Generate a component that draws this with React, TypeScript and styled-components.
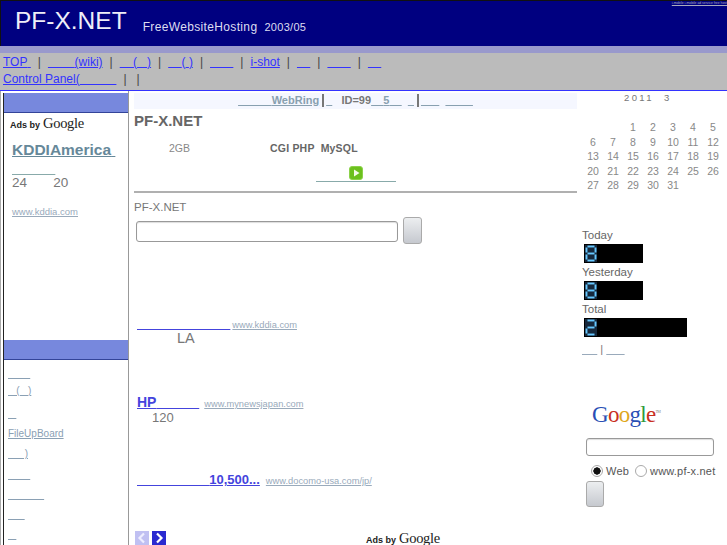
import React from "react";
import styled, { createGlobalStyle } from "styled-components";

const Global = createGlobalStyle`
  html, body { margin: 0; padding: 0; background: #fff; overflow: hidden; }
  body { font-family: "Liberation Sans", Arial, sans-serif; color: #777; }
  * { box-sizing: border-box; }
`;

const Page = styled.div`
  width: 727px;
  height: 545px;
  overflow: hidden;
  display: flex;
  flex-direction: column;
`;
const Header = styled.header`
  height: 46px;
  flex: none;
  background: #000080;
  border-top: 1px solid #111;
  border-left: 1px solid #111;
  display: flex;
  align-items: flex-start;
  color: #ddddf0;
  padding-left: 14px;
`;
const Logo = styled.h1`
  margin: 5px 0 0;
  font-size: 24.5px;
  line-height: 30px;
  font-weight: 400;
  color: #eeeef8;
`;
const Tagline = styled.span`
  margin: 19px 0 0 16px;
  font-size: 12px;
  line-height: 15px;
  letter-spacing: 0.35px;
`;
const TagDate = styled.span`
  margin: 19px 0 0 7px;
  font-size: 11px;
  line-height: 15px;
  letter-spacing: 0.3px;
`;
const TinyLink = styled.a`
  margin: 0 0 0 auto;
  font-size: 3.4px;
  line-height: 5px;
  color: #aab;
  text-decoration: underline;
  white-space: nowrap;
`;
const Strip = styled.div`
  height: 7px;
  flex: none;
  background: #9999cc;
`;
const Nav = styled.nav`
  height: 38px;
  flex: none;
  background: #bbbbbb;
  border-bottom: 1px solid #3333ff;
  padding: 0 0 0 3px;
  font-size: 12px;
  line-height: 17px;
  color: #444;
`;
const NavRow = styled.div`
  display: flex;
  height: 17px;
  white-space: pre;
  &:first-child { margin-top: 1px; }
`;
const NavLink = styled.a`
  color: #3333ff;
  text-decoration: underline;
`;
const Sep = styled.span<{ $m?: number }>`
  margin: 0 ${(p) => p.$m ?? 7}px;
`;
const Columns = styled.div`
  flex: 1;
  min-height: 0;
  display: grid;
  grid-template-columns: 129px 448px 150px;
`;
const Side = styled.aside`
  border-right: 1px solid #999;
  border-left: 1px solid #aaa;
  padding: 2px 0 0 3px;
  height: 100%;
`;
const SideInner = styled.div`
  border-left: 1px solid #222;
  height: 100%;
  margin-left: -1px;
`;
const Bar = styled.div`
  height: 20px;
  background: #7788dd;
  border-bottom: 1px solid #334499;
`;
const AdBlock = styled.div`
  height: 227px;
  padding: 1px 0 0 6px;
`;
const AdsBy = styled.div`
  display: flex;
  align-items: baseline;
  gap: 3px;
  color: #222;
  font-size: 9px;
  line-height: 18px;
  font-weight: 700;
  white-space: pre;
`;
const AdsWord = styled.span`
  font-family: "Liberation Serif", serif;
  font-size: 14.5px;
  font-weight: 400;
  letter-spacing: -0.3px;
`;
const AdTitle = styled.a`
  display: block;
  margin: 7px 0 0 2px;
  font-size: 15.5px;
  line-height: 18px;
  font-weight: 700;
  color: #668899;
  text-decoration: underline;
  white-space: pre;
`;
const AdBlank = styled.a`
  display: block;
  margin: 4px 0 0 2px;
  font-size: 12px;
  line-height: 12px;
  color: #8aa;
  text-decoration: underline;
  white-space: pre;
`;
const AdStat = styled.div`
  margin: 0 0 0 2px;
  font-size: 13.5px;
  line-height: 16px;
  color: #777;
  white-space: pre;
`;
const AdUrl = styled.a`
  display: block;
  margin: 15px 0 0 2px;
  font-size: 9.5px;
  line-height: 12px;
  color: #99aabb;
  text-decoration: underline;
`;
const SideMenu = styled.ul`
  list-style: none;
  margin: 0;
  padding: 4px 0 0 4px;
`;
const SideItem = styled.li<{ $h: number }>`
  height: ${(p) => p.$h}px;
  font-size: 10px;
  line-height: 20px;
`;
const SideLink = styled.a`
  color: #8aa0b4;
  text-decoration: underline;
  white-space: pre;
`;
const Main = styled.main`
  padding: 2px 0 0 5px;
`;
const Ring = styled.div`
  height: 16px;
  background: #f5f7ff;
  font-size: 11px;
  line-height: 15px;
  font-weight: 700;
  color: #777;
  white-space: pre;
  display: flex;
  justify-content: center;
`;
const RingLink = styled.a`
  color: #88a0b0;
  text-decoration: underline;
  white-space: pre;
`;
const RingBar = styled.span`
  width: 2px;
  height: 13px;
  background: #777;
  margin: 1px 2px 0 3px;
`;
const Title = styled.h2`
  margin: 3px 0 0;
  font-size: 15px;
  line-height: 18px;
  font-weight: 700;
  color: #666;
`;
const Specs = styled.div`
  height: 18px;
  margin-top: 9px;
  display: flex;
  font-size: 10.5px;
  line-height: 18px;
  color: #888;
  padding-left: 35px;
`;
const SpecBold = styled.b`
  margin-left: 80px;
  color: #666;
  letter-spacing: 0.2px;
  white-space: pre;
`;
const PlayRow = styled.div`
  height: 17px;
  margin-top: 9px;
  display: flex;
  justify-content: center;
`;
const PlayLink = styled.a`
  display: flex;
  justify-content: center;
  width: 80px;
  margin-left: 1px;
  height: 16px;
  border-bottom: 1px solid #8aa;
`;
const Rule = styled.hr`
  margin: 8px 0 0;
  border: 0;
  height: 2px;
  background: #b0b0b0;
`;
const Site = styled.div`
  margin-top: 7px;
  font-size: 11.5px;
  line-height: 14px;
  color: #777;
`;
const SearchRow = styled.div`
  display: flex;
  align-items: flex-start;
  gap: 5px;
  margin: 3px 0 0 2px;
`;
const TextBox = styled.input<{ $w: number; $h: number; $top: number }>`
  display: block;
  width: ${(p) => p.$w}px;
  height: ${(p) => p.$h}px;
  margin: ${(p) => p.$top}px 0 0;
  padding: 0;
  border: 1px solid #999;
  border-radius: 3px;
  background: #fff;
  box-shadow: inset 0 1px 1px #ddd;
`;
const Btn = styled.button<{ $w: number; $h: number }>`
  display: block;
  width: ${(p) => p.$w}px;
  height: ${(p) => p.$h}px;
  margin: 0;
  padding: 0;
  border: 1px solid #aaa;
  border-radius: 3px;
  background: linear-gradient(#eceef0, #c6c9cf);
`;
const AdList = styled.div`
  margin: 71px 0 0 3px;
`;
const Listing = styled.div<{ $gap: number }>`
  margin-bottom: ${(p) => p.$gap}px;
`;
const Headline = styled.div`
  display: flex;
  align-items: baseline;
  white-space: pre;
`;
const ListLink = styled.a<{ $size?: number }>`
  font-size: ${(p) => p.$size || 14}px;
  line-height: 16px;
  font-weight: 700;
  color: #4444dd;
  text-decoration: underline;
  white-space: pre;
`;
const ListUrl = styled.a<{ $ml: number }>`
  margin-left: ${(p) => p.$ml}px;
  font-size: 9.3px;
  color: #99aabb;
  text-decoration: underline;
  white-space: pre;
`;
const ListBody = styled.div<{ $size: number; $indent: number }>`
  font-size: ${(p) => p.$size}px;
  line-height: 15px;
  margin-left: ${(p) => p.$indent}px;
  color: #777;
`;
const Pager = styled.div`
  display: flex;
  gap: 3px;
  margin: 0 0 0 1px;
  height: 14px;
`;
const PageBtn = styled.span<{ $on?: boolean }>`
  width: 14px;
  height: 14px;
  display: block;
  background: ${(p) => (p.$on ? "#2a2ad0" : "#c0c0f2")};
`;
const PagerAds = styled(AdsBy)`
  margin-left: 197px;
  line-height: 14px;
`;
const Right = styled.aside`
  padding: 0 0 0 5px;
`;
const CalTitle = styled.div`
  height: 15px;
  margin-left: 42px;
  font-size: 9.5px;
  line-height: 14px;
  color: #777;
  letter-spacing: 2.4px;
  white-space: pre;
`;
const CalGrid = styled.div`
  display: grid;
  grid-template-columns: repeat(7, 20px);
  grid-auto-rows: 14.6px;
  margin: 14px 0 0 1px;
  font-size: 10.5px;
  line-height: 14.6px;
  text-align: center;
  color: #888;
`;
const Counter = styled.div`
  margin: 36px 0 0;
`;
const CountLabel = styled.div`
  font-size: 11.5px;
  line-height: 13px;
  color: #666;
  margin-top: 3px;
`;
const LedBox = styled.div<{ $w: number }>`
  width: ${(p) => p.$w}px;
  height: 19px;
  margin: 2px 0 0 2px;
  background: #000;
  padding: 1px 0 0 1px;
  line-height: 0;
`;
const CountLinks = styled.div`
  display: flex;
  margin-top: 5px;
  font-size: 11px;
  line-height: 14px;
  color: #777;
  white-space: pre;
`;
const PlainLink = styled.a`
  color: #9ab;
  text-decoration: underline;
  white-space: pre;
`;
const SearchBox = styled.form`
  margin: 47px 0 0 4px;
  display: flex;
  flex-direction: column;
`;
const GoogleLogo = styled.div`
  margin-left: 6px;
  height: 28px;
  font-family: "Liberation Serif", serif;
  font-size: 23px;
  line-height: 24px;
  letter-spacing: -0.7px;
`;
const Letter = styled.span<{ $c: string }>`
  color: ${(p) => p.$c};
`;
const Tm = styled.sup`
  font-size: 4px;
  color: #888;
  line-height: 0;
`;
const Radios = styled.div`
  display: flex;
  align-items: center;
  margin: 6px 0 1px 5px;
  font-size: 11px;
  line-height: 18px;
  color: #555;
  white-space: pre;
  letter-spacing: 0.2px;
`;
const Radio = styled.input`
  appearance: none;
  width: 12px;
  height: 12px;
  margin: 0 3px 0 0;
  border: 1px solid #aaa;
  border-radius: 50%;
  background: #fff;
  &:checked {
    background: radial-gradient(circle, #111 0 3.4px, #fff 3.9px);
  }
`;
const RadioGap = styled.span`
  width: 6px;
`;

const segs: Record<string, string[]> = {
  "8": ["a", "b", "c", "d", "e", "f", "g"],
  "2": ["a", "b", "g", "e", "d"],
};
const paths: Record<string, string> = {
  a: "M2.5 1.5H9.5",
  b: "M10.5 2.5V7.5",
  c: "M10.5 9.5V14.5",
  d: "M2.5 15.5H9.5",
  e: "M1.5 9.5V14.5",
  f: "M1.5 2.5V7.5",
  g: "M2.5 8.5H9.5",
};
const Led = ({ d }: { d: string }) => (
  <svg width="12" height="17" viewBox="0 0 12 17" aria-label={d}>
    <rect width="12" height="17" fill="#16283c" />
    {segs[d].map((s) => (
      <path key={s} d={paths[s]} stroke="#66c8ff" strokeWidth="1.9" fill="none" />
    ))}
  </svg>
);
const Play = () => (
  <svg width="14" height="14" viewBox="0 0 14 14">
    <rect x="0.5" y="0.5" width="13" height="13" rx="2.5" fill="#6cc01e" stroke="#8bd24a" />
    <path d="M5 3.5V10.5L10.5 7Z" fill="#f4fbe8" />
  </svg>
);
const Chev = ({ dir, color }: { dir: "l" | "r"; color: string }) => (
  <svg width="14" height="14" viewBox="0 0 14 14">
    <path d={dir === "l" ? "M9 2.5L4.5 7L9 11.5" : "M5 2.5L9.5 7L5 11.5"} stroke={color} strokeWidth="2.2" fill="none" />
  </svg>
);
const n = (c: number) => "\u00a0".repeat(c);
const days = [
  "", "", "1", "2", "3", "4", "5",
  "6", "7", "8", "9", "10", "11", "12",
  "13", "14", "15", "16", "17", "18", "19",
  "20", "21", "22", "23", "24", "25", "26",
  "27", "28", "29", "30", "31", "", "",
];
const side: [string, number][] = [
  [n(8), 17],
  [n(3) + "(" + n(3) + ")", 23],
  [n(3), 20],
  ["FileUpBoard", 20],
  [n(6) + ")", 21],
  [n(8), 20],
  [n(13), 20],
  [n(6), 20],
  [n(3), 20],
];

export default function App() {
  return (
    <Page>
      <Global />
      <Header>
        <Logo>PF-X.NET</Logo>
        <Tagline>FreeWebsiteHosting</Tagline>
        <TagDate>2003/05</TagDate>
        <TinyLink>i-mobile i-mobile ad service free host</TinyLink>
      </Header>
      <Strip />
      <Nav>
        <NavRow>
          <NavLink>TOP{n(1)}</NavLink><Sep>|</Sep>
          <NavLink>{n(8)}(wiki)</NavLink><Sep>|</Sep>
          <NavLink>{n(4)}({n(3)})</NavLink><Sep>|</Sep>
          <NavLink>{n(4)}({n(1)})</NavLink><Sep>|</Sep>
          <NavLink>{n(7)}</NavLink><Sep>|</Sep>
          <NavLink>i-shot</NavLink><Sep>|</Sep>
          <NavLink>{n(4)}</NavLink><Sep>|</Sep>
          <NavLink>{n(7)}</NavLink><Sep>|</Sep>
          <NavLink>{n(4)}</NavLink>
        </NavRow>
        <NavRow>
          <NavLink>Control Panel({n(11)}</NavLink><Sep>|</Sep><Sep $m={3}>|</Sep>
        </NavRow>
      </Nav>
      <Columns>
        <Side>
          <SideInner>
            <Bar />
            <AdBlock>
              <AdsBy>Ads by<AdsWord>Google</AdsWord></AdsBy>
              <AdTitle>KDDIAmerica{n(1)}</AdTitle>
              <AdBlank>{n(13)}</AdBlank>
              <AdStat>24{n(7)}20</AdStat>
              <AdUrl>www.kddia.com</AdUrl>
            </AdBlock>
            <Bar />
            <SideMenu>
              {side.map(([t, h], i) => (
                <SideItem key={i} $h={h}><SideLink>{t}</SideLink></SideItem>
              ))}
            </SideMenu>
          </SideInner>
        </Side>
        <Main>
          <Ring>
            <RingLink>{n(11)}WebRing</RingLink><RingBar /><RingLink>{n(2)}</RingLink>
            <span>{n(3)}ID=99</span><RingLink>{n(4)}5{n(4)}</RingLink>
            <span>{n(2)}</span><RingLink>{n(2)}</RingLink><RingBar /><RingLink>{n(6)}</RingLink>
            <span>{n(2)}</span><RingLink>{n(9)}</RingLink>
          </Ring>
          <Title>PF-X.NET</Title>
          <Specs>2GB<SpecBold>CGI PHP  MySQL</SpecBold></Specs>
          <PlayRow><PlayLink><Play /></PlayLink></PlayRow>
          <Rule />
          <Site>PF-X.NET</Site>
          <SearchRow>
            <TextBox $w={262} $h={21} $top={4} />
            <Btn $w={19} $h={27} />
          </SearchRow>
          <AdList>
            <Listing $gap={48}>
              <Headline><ListLink>{n(24)}</ListLink><ListUrl $ml={2}>www.kddia.com</ListUrl></Headline>
              <ListBody $size={14.5} $indent={40}>LA</ListBody>
            </Listing>
            <Listing $gap={47}>
              <Headline><ListLink>HP{n(11)}</ListLink><ListUrl $ml={5}>www.mynewsjapan.com</ListUrl></Headline>
              <ListBody $size={13} $indent={15}>120</ListBody>
            </Listing>
            <Listing $gap={43}>
              <Headline><ListLink $size={13}>{n(20)}10,500...</ListLink><ListUrl $ml={6}>www.docomo-usa.com/jp/</ListUrl></Headline>
            </Listing>
          </AdList>
          <Pager>
            <PageBtn><Chev dir="l" color="#eef" /></PageBtn>
            <PageBtn $on><Chev dir="r" color="#fff" /></PageBtn>
            <PagerAds>Ads by<AdsWord>Google</AdsWord></PagerAds>
          </Pager>
        </Main>
        <Right>
          <CalTitle>2011  3</CalTitle>
          <CalGrid>
            {days.map((d, i) => <span key={i}>{d}</span>)}
          </CalGrid>
          <Counter>
            <CountLabel>Today</CountLabel>
            <LedBox $w={59}><Led d="8" /></LedBox>
            <CountLabel>Yesterday</CountLabel>
            <LedBox $w={59}><Led d="8" /></LedBox>
            <CountLabel>Total</CountLabel>
            <LedBox $w={103}><Led d="2" /></LedBox>
            <CountLinks><PlainLink>{n(5)}</PlainLink> | <PlainLink>{n(6)}</PlainLink></CountLinks>
          </Counter>
          <SearchBox>
            <GoogleLogo>
              <Letter $c="#2a4fb5">G</Letter><Letter $c="#c9301f">o</Letter><Letter $c="#e0a81c">o</Letter><Letter $c="#2a4fb5">g</Letter><Letter $c="#2f9a3c">l</Letter><Letter $c="#c9301f">e</Letter><Tm>TM</Tm>
            </GoogleLogo>
            <TextBox $w={128} $h={18} $top={7} />
            <Radios>
              <Radio type="radio" name="s" defaultChecked />Web<RadioGap /><Radio type="radio" name="s" />www.pf-x.net
            </Radios>
            <Btn $w={18} $h={26} />
          </SearchBox>
        </Right>
      </Columns>
    </Page>
  );
}
